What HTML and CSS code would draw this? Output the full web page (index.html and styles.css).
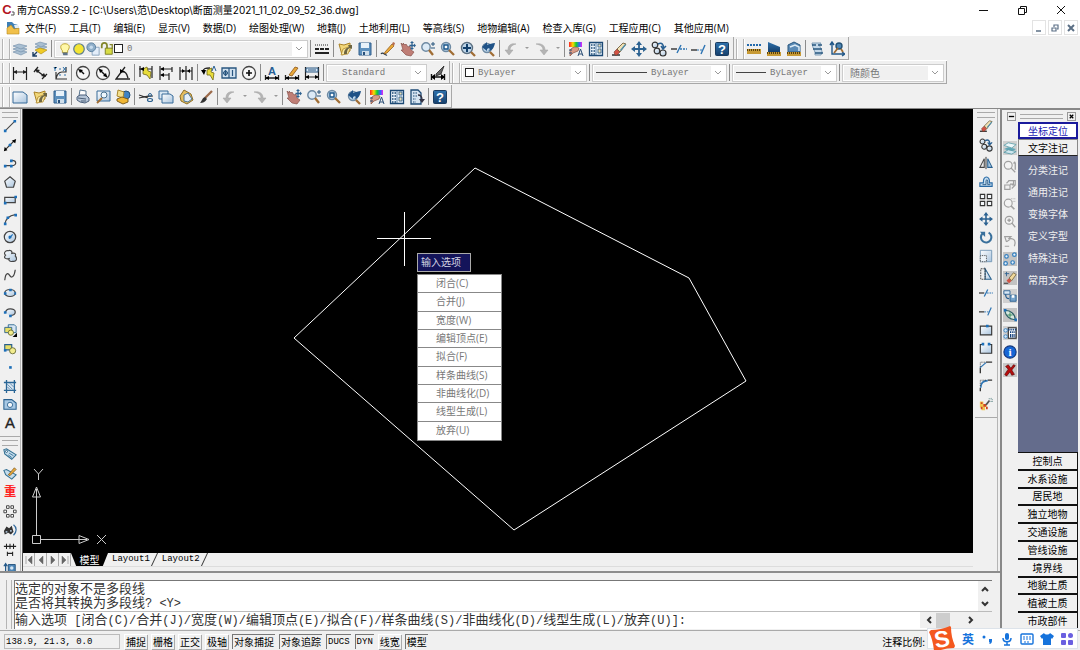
FILE: index.html
```html
<!DOCTYPE html>
<html lang="zh-CN">
<head>
  <meta charset="UTF-8">
  <meta name="viewport" content="width=device-width, initial-scale=1.0">
  <title>南方CASS9.2</title>
  <link rel="stylesheet" href="styles.css">
</head>
<body>
  <svg class="defs" aria-hidden="true">
    <linearGradient id="glass" x2="1" y2="1"><stop stop-color="#fff"/><stop offset="1" stop-color="#a9c4de"/></linearGradient>
    <linearGradient id="deep" x2="0" y2="1"><stop stop-color="#2f72ad"/><stop offset="1" stop-color="#163f6b"/></linearGradient>
    <linearGradient id="rainbow"><stop stop-color="#f22"/><stop offset=".3" stop-color="#fd0"/><stop offset=".55" stop-color="#1c3"/><stop offset=".8" stop-color="#36f"/><stop offset="1" stop-color="#e2e"/></linearGradient>
  </svg>
  <!-- icon sprite -->
  <svg class="sprite" aria-hidden="true">
    <symbol id="layers" viewBox="0 0 16 16"><g fill="#a9bfd2" stroke="#6d8aa6" stroke-width=".6"><path d="M1 11l6-2 8 2-6 3z"/><path d="M1 8l6-2 8 2-6 3z"/><path d="M1 5l6-2 8 2-6 3z"/></g></symbol>
    <symbol id="layerprev" viewBox="0 0 16 16"><g fill="#a9bfd2" stroke="#6d8aa6" stroke-width=".6"><path d="M3 6l5-2 7 2-6 3z"/><path d="M3 3l5-2 7 2-6 3z"/></g><path d="M3 9l5-2 7 2-6 4z" fill="#f0cb28" stroke="#a98608" stroke-width=".6"/><path d="M1 15l4-4M1 11v4h4" stroke="#1c3f66" stroke-width="1.4" fill="none"/></symbol>
    <symbol id="bulb" viewBox="0 0 16 16"><path d="M5 10C1 5 4 2 8 2s7 3 3 8v2H5z" fill="#fff8a8" stroke="#b59b22"/><path d="M5 12h6v3H6z" fill="#5f7388"/></symbol>
    <symbol id="sun" viewBox="0 0 16 16"><circle cx="8" cy="8" r="6" fill="#f4e533" stroke="#5d7d8d" stroke-width="1.4"/></symbol>
    <symbol id="freeze" viewBox="0 0 16 16"><path d="M7 6h8v9H7z" fill="#e4eefa" stroke="#85a0bb"/><circle cx="6" cy="6" r="5" fill="#8faec9" stroke="#557c9d"/><circle cx="6" cy="6" r="2" fill="#c6dbee"/></symbol>
    <symbol id="lock" viewBox="0 0 16 16"><path d="M2 7V4a3 3 0 0 1 6 0v4" fill="none" stroke="#83862c" stroke-width="2"/><path d="M6 7h8v7H6z" fill="#d8dc45" stroke="#76791f"/><path d="M11 3h3v5" fill="none" stroke="#83862c" stroke-width="1.5"/></symbol>
    <symbol id="ltype" viewBox="0 0 16 16"><path d="M1 4h14" stroke="#222" stroke-dasharray="1 1"/><path d="M1 8h14" stroke="#222" stroke-width="2" stroke-dasharray="4 1"/><path d="M1 12h14" stroke="#222" stroke-width="2"/></symbol>
    <symbol id="open" viewBox="0 0 16 16"><path d="M2 3l5 1 6-2v8l-8 4z" fill="#f2d779" stroke="#aa8227"/><path d="M4 14l2-6 8-3-3 8z" fill="#f7e6a1" stroke="#aa8227" stroke-width=".7"/><path d="M7 13c0-4 2-6 5-7l-1-2h4v4l-2-1c-3 1-3 4-3 6z" fill="#6d6541"/></symbol>
    <symbol id="save" viewBox="0 0 16 16"><path d="M2 2h12v12H2z" fill="#5d90bd" stroke="#315e8c"/><path d="M4 2h8v5H4z" fill="#e8f2fa"/><path d="M5 10h7v4H5z" fill="#cfdeea"/><path d="M6 11h2v3H6z" fill="#28517c"/></symbol>
    <symbol id="pencil" viewBox="0 0 16 16"><path d="M1 13c2-3 4 2 6 1" fill="none" stroke="#2b3c4d" stroke-width="1.300"/><path d="M5 11l7-8 2 2-7 7-3 1z" fill="#eaa93a" stroke="#8a5414" stroke-width=".7"/><path d="M12 3l1-2 2 1-1 3z" fill="#b56d50"/></symbol>
    <symbol id="pan" viewBox="0 0 16 16"><path d="M1 2l2 2 0-2 2 2 1-1 2 3 2-1 1 4 3 2-3 4-5-1-5-5 2 0z" fill="#bf7e76" stroke="#7c443e" stroke-width=".6"/><path d="M12 2v5M9.500 4.500h5" stroke="#2d6190" stroke-width="1.300"/><path d="M12 0l-2 2h4zM12 9l-2-2h4zM16 4.500l-2-2v4z" fill="#2d6190"/></symbol>
    <symbol id="zoomrt" viewBox="0 0 16 16"><circle cx="6" cy="6" r="4.200" fill="#dceaf6" stroke="#6e8aa3" stroke-width="1.4"/><path d="M9 9l4 5" stroke="#a06d34" stroke-width="2.300"/><path d="M11 3h4M13 1v4M11 7h4" stroke="#26547d"/></symbol>
    <symbol id="zoomwin" viewBox="0 0 16 16"><circle cx="6" cy="6" r="4.500" fill="#bcd4e8" stroke="#6e8aa3" stroke-width="1.4"/><path d="M4 4h4v4H4z" fill="#fff" stroke="#1c578b" stroke-width="1.400"/><path d="M9 9l5 5" stroke="#a06d34" stroke-width="2.300"/></symbol>
    <symbol id="zoomall" viewBox="0 0 16 16"><circle cx="7" cy="7" r="5.500" fill="#bcd4e8" stroke="#5b6f80" stroke-width="1.400"/><path d="M3 7h8M7 3v8" stroke="#123f6a" stroke-width="2"/><path d="M11 11l4 4" stroke="#a06d34" stroke-width="2.300"/></symbol>
    <symbol id="zoomprev" viewBox="0 0 16 16"><circle cx="7" cy="7" r="4.500" fill="#bcd4e8" stroke="#6e8aa3" stroke-width="1.400"/><path d="M10 11l4 4" stroke="#a06d34" stroke-width="2.300"/><path d="M2 6l5-5v3c3-1 5-2 8-2-1 5-3 8-7 8 2-1 2-2 1-3L7 8v2z" fill="#1f5287"/></symbol>
    <symbol id="undo" viewBox="0 0 16 16"><path d="M13 3C8 2 5 4 5 9l-3 0 4 5 4-5H7c0-3 2-5 6-6z" fill="#b4b4b4" stroke="#a2a2a2" stroke-width=".5"/></symbol>
    <symbol id="redo" viewBox="0 0 16 16"><path d="M2 3c5-1 9 1 9 6h3l-4 5-4-5h3c0-3-2-5-7-6z" fill="#b4b4b4" stroke="#a2a2a2" stroke-width=".5"/></symbol>
    <symbol id="props" viewBox="0 0 16 16"><path d="M1 1h13v5H1z" fill="url(#rainbow)"/><path d="M2 9c4-5 8-2 9-2l-1 3-5 2-3 3z" fill="#d99b87" stroke="#88503f" stroke-width=".7"/><path d="M10 15l2.500-7L15 15M11 13h3M1 9h3M1 12h3" stroke="#284c74" fill="none"/></symbol>
    <symbol id="palette" viewBox="0 0 16 16"><path d="M1.500 1.500h13v13h-13z" fill="#eaf2f9" stroke="#1d4a75" stroke-width="1.300"/><path d="M3 4h4M3 7h4M3 10h4M3 13h4" stroke="#1c4a76" stroke-width="1.300" stroke-dasharray="1.500 1"/><path d="M8 2v12" stroke="#5f86aa"/><path d="M10 3h3v3h-3zM10 8h3v4h-3z" fill="#e9dfb8" stroke="#245587" stroke-width=".8"/></symbol>
    <symbol id="sheet" viewBox="0 0 16 16"><path d="M2 1h7l3 3v11H2z" fill="#d6e4f1" stroke="#1d4a75" stroke-width="1.300"/><path d="M4 4h4M4 7h4M4 10h3M4 13h3" stroke="#1c4a76" stroke-dasharray="1.500 1"/><path d="M9 6c3 0 4 2 4 5" fill="none" stroke="#334" stroke-width="1.400"/><path d="M10 10h6l-3 4z" fill="#334"/></symbol>
    <symbol id="eraser" viewBox="0 0 16 16"><path d="M1 14h8" stroke="#222" stroke-width="1.400"/><path d="M3 11l3-3 3 3-3 3H4z" fill="#d15344" stroke="#75352b" stroke-width=".6"/><path d="M6 8l6-6 3 1-6 8z" fill="#f3e2b4" stroke="#62512d" stroke-width=".8"/><path d="M9 9l5-6 1 1-5 6z" fill="#4f8fae"/></symbol>
    <symbol id="move" viewBox="0 0 16 16"><path d="M8 2v12M2 8h12" stroke="#2c6291" stroke-width="1.800"/><path d="M8 0l3 4H5zM8 16l3-4H5zM0 8l4-3v6zM16 8l-4-3v6z" fill="#2c6291"/></symbol>
    <symbol id="copy" viewBox="0 0 16 16"><circle cx="4" cy="4" r="2.800" fill="url(#glass)" stroke="#333" stroke-width="1.200"/><circle cx="6" cy="10" r="2.800" fill="url(#glass)" stroke="#333" stroke-width="1.200"/><circle cx="12" cy="12" r="3" fill="url(#glass)" stroke="#333" stroke-width="1.200"/><path d="M7 3c4-2 6 1 5 4M10 5l2 3 3-3" fill="none" stroke="#285f91" stroke-width="1.500"/></symbol>
    <symbol id="trim" viewBox="0 0 16 16"><path d="M0 8h6" stroke="#222" stroke-width="1.300"/><path d="M6 12l4-8" stroke="#2d74b3" stroke-width="1.400"/><path d="M9 8h7" stroke="#2d74b3" stroke-width="1.300" stroke-dasharray="2 1"/></symbol>
    <symbol id="extend" viewBox="0 0 16 16"><path d="M0 9h6" stroke="#222" stroke-width="1.300"/><path d="M6 9h5" stroke="#2d74b3" stroke-dasharray="2 1"/><path d="M10 13l4-9" stroke="#2d74b3" stroke-width="1.400"/></symbol>
    <symbol id="help" viewBox="0 0 16 16"><rect x="1.500" y="1.500" width="13" height="13" rx="1" fill="url(#deep)" stroke="#1a3c60"/><text x="8" y="13" class="i-help">?</text></symbol>
    <symbol id="dist" viewBox="0 0 16 16"><path d="M1 4h14" stroke="#2269ad" stroke-width="2" stroke-dasharray="2 1"/><path d="M1 8h14v5H1z" fill="#c79a35"/><path d="M1 9h14" stroke="#5d4108" stroke-width="2" stroke-dasharray="1 1"/></symbol>
    <symbol id="area" viewBox="0 0 16 16"><path d="M2 1l12 5v5H2z" fill="url(#deep)"/><path d="M1 11h14v4H1z" fill="#c79a35"/><path d="M1 12h14" stroke="#5d4108" stroke-width="2" stroke-dasharray="1 1"/></symbol>
    <symbol id="mass" viewBox="0 0 16 16"><path d="M2 4l6-3 6 3v7H2z" fill="#5a8ab5" stroke="#29577f"/><path d="M4 6l5-2 4 2v4" fill="none" stroke="#ddebf5" stroke-width="1.500"/><path d="M1 11h14v4H1z" fill="#c79a35"/><path d="M1 12h14" stroke="#5d4108" stroke-width="2" stroke-dasharray="1 1"/></symbol>
    <symbol id="list" viewBox="0 0 16 16"><path d="M3 2h9c-3 3 1 6 1 9l-1 3H6c1-4-3-7-3-12z" fill="#c4d8e9" stroke="#7f9cb5"/><path d="M3 4h4M4 8h5M6 12h5M9 4h4M9 8h4M11 12h3" stroke="#28577f" stroke-width="1.300"/></symbol>
    <symbol id="locate" viewBox="0 0 16 16"><path d="M3 2v11h12M1 4l2-3 2 3M13 11l3 2-3 2" fill="none" stroke="#225889" stroke-width="1.400"/><circle cx="10" cy="5" r="3" fill="#4f86b4" stroke="#235174" stroke-width="1.400"/><path d="M9 7l-4 5M12 8l2 3" stroke="#a06d34" stroke-width="1.800"/></symbol>

    <symbol id="dimlin" viewBox="0 0 16 16"><path d="M1.500 2v13M14.500 2v13M2 7h12" stroke="#222" stroke-width="1.200"/><path d="M1 7l4-2v4zM15 7l-4-2v4z" fill="#222"/></symbol>
    <symbol id="dimali" viewBox="0 0 16 16"><path d="M2 7l4-5M10 14l5-5M4 5l8 6" stroke="#222" stroke-width="1.300"/><path d="M3 4l5 1-3 3zM14 12l-5-1 3-3z" fill="#222"/></symbol>
    <symbol id="dimord" viewBox="0 0 16 16"><path d="M4 7v7h11M4 14c1-5 3-7 6-7h4V2" stroke="#333" fill="none" stroke-width="1.200"/><path d="M2 2l1 2 2-2M3 4v2M11 2l3 4M14 2l-3 4M7 4h2M7 10h2M12 10h2" stroke="#2f71a9"/></symbol>
    <symbol id="dimrad" viewBox="0 0 16 16"><circle cx="8" cy="8" r="6.500" fill="#f7f7f7" stroke="#444" stroke-width="1.300"/><path d="M9 9L5 5" stroke="#111" stroke-width="1.500"/><path d="M3 4l5 1-3 3z"/></symbol>
    <symbol id="dimdia" viewBox="0 0 16 16"><circle cx="8" cy="8" r="6.500" fill="#f7f7f7" stroke="#444" stroke-width="1.300"/><path d="M4 4l8 8" stroke="#111" stroke-width="1.500"/><path d="M4 4l4 1-3 3zM12 12l-4-1 3-3z"/></symbol>
    <symbol id="dimang" viewBox="0 0 16 16"><path d="M10 2L1 14h14M6 6c4 0 6 2 7 7" fill="none" stroke="#222" stroke-width="1.300"/><path d="M5 4l5 3-5 1z"/></symbol>
    <symbol id="qdim" viewBox="0 0 16 16"><path d="M1 4h13M2 1v11M14 1v12" stroke="#222" stroke-width="1.200"/><path d="M5 4l4-2 1 4 3 1-1 7-3-4-4-1z" fill="#e8dc3a" stroke="#706715" stroke-width=".8"/><path d="M2 4l4-2v4z"/></symbol>
    <symbol id="dimbase" viewBox="0 0 16 16"><path d="M2 1v14M14 2v5M3 4h11M3 10h8M11 8v7" stroke="#222" stroke-width="1.200"/><path d="M2 4l4-2v4zM2 10l4-2v4z"/></symbol>
    <symbol id="dimcont" viewBox="0 0 16 16"><path d="M2 2v13M8 1v14M14 2v13M2 6h12" stroke="#222" stroke-width="1.200"/><path d="M7 6L4 4v4zM9 6l3-2v4z"/></symbol>
    <symbol id="leader" viewBox="0 0 16 16"><path d="M2 7c0-4 3-4 7-4" fill="none" stroke="#222" stroke-width="1.300"/><path d="M0 5l5 0-2 5z"/><path d="M6 5l5-2-1 4 3 1-1 7-3-5-3 0z" fill="#e8dc3a" stroke="#706715" stroke-width=".8"/><path d="M11 6l2-5 2 5" fill="none" stroke="#265e94"/></symbol>
    <symbol id="tol" viewBox="0 0 16 16"><path d="M1 3h14v10H1z" fill="#d2e2f0" stroke="#28557f" stroke-width="1.300"/><path d="M8 3v10M11.500 5v6M2 8h5M4.500 5v6" stroke="#28557f" stroke-width="1.200"/><circle cx="4.500" cy="8" r="2" fill="none" stroke="#28557f"/></symbol>
    <symbol id="center" viewBox="0 0 16 16"><circle cx="8" cy="8" r="6.500" fill="#f7f7f7" stroke="#444" stroke-width="1.300"/><path d="M5 8h6M8 5v6" stroke="#111" stroke-width="1.700"/></symbol>
    <symbol id="dimedit" viewBox="0 0 16 16"><text x="8" y="10" class="i-blue">A</text><path d="M1.500 10v5M14.500 10v5M2 13h12" stroke="#222" stroke-width="1.300"/><path d="M1 13l4-2v4zM15 13l-4-2v4z"/></symbol>
    <symbol id="dimtedit" viewBox="0 0 16 16"><path d="M1.500 10v5M14.500 10v5M2 13h12" stroke="#222" stroke-width="1.300"/><path d="M5 10l6-8 3 1-6 8z" fill="#e9a93b" stroke="#8a5316" stroke-width=".8"/><path d="M1 13l4-2v4zM15 13l-4-2v4z"/></symbol>
    <symbol id="dimupd" viewBox="0 0 16 16"><path d="M1.500 2v13M14.500 2v13M2 12h12" stroke="#222" stroke-width="1.200"/><path d="M2 3h12v4H2z" fill="#d9e8f5" stroke="#28557f"/><path d="M4 5h8" stroke="#28557f"/><path d="M1 12l4-2v4zM15 12l-4-2v4z"/></symbol>
    <symbol id="dimstyle" viewBox="0 0 16 16"><path d="M1.500 9v6M14.500 9v6M2 12h12" stroke="#111" stroke-width="1.400"/><path d="M1 12l4-3v6zM15 12l-4-3v6z"/><path d="M6 9l8-8-3 8-5 2z" fill="#666" stroke="#222" stroke-width=".8"/></symbol>

    <symbol id="new" viewBox="0 0 16 16"><path d="M1 3h10l4 3v8H1z" fill="url(#glass)" stroke="#376b99"/></symbol>
    <symbol id="print" viewBox="0 0 16 16"><path d="M5 1l6 1v5H4z" fill="#fff" stroke="#59748e"/><path d="M2 8l3-2h6l3 3v3l-4 2-5-1-3-2z" fill="#b5c4d6" stroke="#4a5e7a"/><path d="M3 9l8 1M6 12h5" stroke="#4c6078"/></symbol>
    <symbol id="preview" viewBox="0 0 16 16"><path d="M2 2h13v10H2z" fill="url(#glass)" stroke="#376b99"/><circle cx="9" cy="6" r="3" fill="#edf6fc" stroke="#49718f"/><path d="M7 9l-5 5" stroke="#a06d34" stroke-width="2"/></symbol>
    <symbol id="publish" viewBox="0 0 16 16"><circle cx="11" cy="6" r="4" fill="#4083c2" stroke="#245078"/><path d="M3 1l6 2-1 6-6-2z" fill="#f3df8c" stroke="#a9862d"/><path d="M2 10l5-2 6 2v3l-5 2-6-3z" fill="#f0b633" stroke="#7f6020"/></symbol>
    <symbol id="cut" viewBox="0 0 16 16"><path d="M1 6l9 3M1 9l9-2h5" stroke="#333" stroke-width="1.200"/><circle cx="12" cy="6" r="1.500" fill="none" stroke="#2d618f"/><ellipse cx="12" cy="11" rx="2.500" ry="1.500" fill="none" stroke="#2d618f" stroke-width="1.200"/></symbol>
    <symbol id="copyclip" viewBox="0 0 16 16"><path d="M1 2h9v8H1z" fill="#d9e7f3" stroke="#376b99"/><path d="M4 5h8l3 2v7H4z" fill="url(#glass)" stroke="#376b99"/></symbol>
    <symbol id="paste" viewBox="0 0 16 16"><path d="M2 7l4-6 7 4 2 6-6 4-6-3z" fill="#e4bd5e" stroke="#8c6d27"/><path d="M6 6l4-2 4 6-4 3-4-1z" fill="#e4eff8" stroke="#4b7497"/></symbol>
    <symbol id="brush" viewBox="0 0 16 16"><path d="M14 2l-7 7" stroke="#9b6a4a" stroke-width="2.300"/><path d="M7 8l2 2c-2 3-4 4-7 4 2-2 2-5 5-6z" fill="#333"/></symbol>

    <symbol id="line" viewBox="0 0 16 16"><path d="M3 13L13 3" stroke="#444" stroke-width="1.300"/><path d="M1 12h3v3H1zM12 1h3v3h-3z" fill="#1c6fb9"/></symbol>
    <symbol id="xline" viewBox="0 0 16 16"><path d="M3 13L13 3" stroke="#333" stroke-width="1.500"/><path d="M1 15l1-5 3 4zM15 1l-1 5-4-3z"/><circle cx="8" cy="8" r="1.800" fill="#1c6fb9"/></symbol>
    <symbol id="pline" viewBox="0 0 16 16"><path d="M2 11h8c6 0 6-6 0-6" fill="none" stroke="#444" stroke-width="1.400"/><path d="M1 10h3v3H1zM8 10h3v3H8zM8 4h3v3H8z" fill="#1c6fb9"/></symbol>
    <symbol id="polygon" viewBox="0 0 16 16"><path d="M8 2l6 5-2 7H4L2 7z" fill="url(#glass)" stroke="#444" stroke-width="1.400"/></symbol>
    <symbol id="rect" viewBox="0 0 16 16"><path d="M2 5h12v6H2z" fill="url(#glass)" stroke="#444" stroke-width="1.400"/><path d="M1 10h3v3H1zM13 3h3v3h-3z" fill="#1c6fb9"/></symbol>
    <symbol id="arc" viewBox="0 0 16 16"><path d="M2 14C3 8 7 4 14 3" fill="none" stroke="#444" stroke-width="1.400"/><path d="M1 12h3v3H1zM4 5h3v3H4zM13 2h3v3h-3z" fill="#1c6fb9"/></symbol>
    <symbol id="circle" viewBox="0 0 16 16"><circle cx="8" cy="8" r="6.500" fill="url(#glass)" stroke="#444" stroke-width="1.400"/><path d="M7 10l4-5" stroke="#1c6fb9" stroke-width="1.300"/><circle cx="8" cy="8" r="1.800" fill="#1c6fb9"/></symbol>
    <symbol id="cloud" viewBox="0 0 16 16"><path d="M3 7c-3-2 0-6 3-5 2-1 5 0 4 3 4-1 5 1 4 3 3 3 1 7-3 6-3 1-5-1-4-3-4 1-7-1-4-4z" fill="url(#glass)" stroke="#444" stroke-width="1.300"/></symbol>
    <symbol id="spline" viewBox="0 0 16 16"><path d="M2 14C3 4 6 6 8 9s5 1 6-7" fill="none" stroke="#444" stroke-width="1.400"/></symbol>
    <symbol id="ellipse" viewBox="0 0 16 16"><ellipse cx="8" cy="8" rx="6" ry="4" fill="url(#glass)" stroke="#444" stroke-width="1.400"/><path d="M1 7h3v3H1zM7 3h3v3H7zM13 7h2v3h-2z" fill="#1c6fb9"/></symbol>
    <symbol id="earc" viewBox="0 0 16 16"><path d="M3 9c-1-6 11-6 11-1 0 3-3 4-6 4" fill="url(#glass)" stroke="#444" stroke-width="1.400"/><path d="M1 7h3v3H1zM7 11h3v3H7z" fill="#1c6fb9"/></symbol>
    <symbol id="insert" viewBox="0 0 16 16"><path d="M6 2h7l2 2v7H6z" fill="#d7e6f3" stroke="#28658f"/><path d="M2 5h8v6H2z" fill="#e7de67" stroke="#285f8c"/><circle cx="9" cy="11" r="3" fill="#f2ec8e" stroke="#666930"/><path d="M16 11v5h-5z"/></symbol>
    <symbol id="block" viewBox="0 0 16 16"><path d="M2 3h8v6H2z" fill="#e7de67" stroke="#285f8c" stroke-width="1.300"/><circle cx="11" cy="10" r="3.500" fill="#f2ec8e" stroke="#666930"/><path d="M1 8h3v3H1z" fill="#1c6fb9"/></symbol>
    <symbol id="point" viewBox="0 0 16 16"><path d="M7 7h3v3H7z" fill="#1c6fb9"/></symbol>
    <symbol id="hatch" viewBox="0 0 16 16"><path d="M4 4h9v9H4z" fill="#dce8f2"/><path d="M1 4h14M1 13h14M4 1v15M13 1v15" stroke="#2a6696" stroke-width="1.500"/><path d="M5 6l6 6M8 5l4 4M5 9l3 3" stroke="#4e7fa8"/></symbol>
    <symbol id="region" viewBox="0 0 16 16"><path d="M1 3h9l5 4v7H1z" fill="#a9c9e4" stroke="#28608f" stroke-width="1.200"/><circle cx="8" cy="9" r="3" fill="#f2f6fa" stroke="#28608f"/></symbol>
    <symbol id="text" viewBox="0 0 16 16"><text x="8" y="14" class="i-a">A</text></symbol>
    <symbol id="tag" viewBox="0 0 16 16"><path d="M1 3l3-1 11 7-5 5-8-6z" fill="#c5dceb" stroke="#337092" stroke-width="1.200"/><circle cx="4" cy="5" r="1.200" fill="#fff" stroke="#245a80"/><path d="M7 7l5 3M6 9l4 3" stroke="#327199"/></symbol>
    <symbol id="tagedit" viewBox="0 0 16 16"><path d="M1 5l3-1 11 6-5 5-7-5z" fill="#c5dceb" stroke="#337092" stroke-width="1.200"/><path d="M6 10l7-8 2 2-7 7z" fill="#e9a93b" stroke="#745018" stroke-width=".8"/></symbol>
    <symbol id="weight" viewBox="0 0 16 16"><text x="8" y="13" class="i-zhong">重</text></symbol>
    <symbol id="nodes4" viewBox="0 0 16 16"><path d="M4 2h3v3H4zM9 2h3v3H9zM1 7h3v3H1zM12 7h3v3h-3zM4 12h3v3H4zM9 12h3v3H9z" fill="#fff" stroke="#444" stroke-width="1.100"/></symbol>
    <symbol id="find" viewBox="0 0 16 16"><path d="M1 9l3-5 3 2 3-3 2 7-3 3-3-2-4 2z" fill="#333"/><path d="M3 10h2M8 9h2" stroke="#a4b8cb" stroke-width="2"/><path d="M12 2c4 3 4 8 0 12" fill="none" stroke="#31699c" stroke-width="1.400"/></symbol>
    <symbol id="dims" viewBox="0 0 16 16"><path d="M1 5h14M4 2v6M8 2v6M12 2v6M5 11v5M11 11v5M5 13h6" stroke="#222" stroke-width="1.200"/></symbol>
    <symbol id="blockref" viewBox="0 0 16 16"><path d="M3 4v11M1 6l2-3 2 3" fill="none" stroke="#225889" stroke-width="1.400"/><path d="M6 4h8v9H6z" fill="#4d86b8" stroke="#1f4e79"/><circle cx="10" cy="8" r="2" fill="#d3e5f3"/></symbol>

    <symbol id="mirror" viewBox="0 0 16 16"><path d="M6 3v10H1z" fill="#eee" stroke="#444" stroke-width="1.200"/><path d="M10 3v10h5z" fill="#a6c8e4" stroke="#28608f" stroke-width="1.200"/><path d="M8 1v14" stroke="#222"/></symbol>
    <symbol id="offset" viewBox="0 0 16 16"><path d="M1 13v-4h4c-1-9 8-9 7 0h3v4z" fill="#c1dbef" stroke="#2869a4" stroke-width="1.300"/><path d="M4 11h4V7c0-2 2-2 2 0v4h3" fill="none" stroke="#28557f"/></symbol>
    <symbol id="array" viewBox="0 0 16 16"><path d="M1.500 1.500h5v5h-5zM9.500 1.500h5v5h-5zM1.500 9.500h5v5h-5zM9.500 9.500h5v5h-5z" fill="#f4f7fa" stroke="#333" stroke-width="1.300"/></symbol>
    <symbol id="rotate" viewBox="0 0 16 16"><path d="M4 4a6 6 0 1 0 7-1" fill="none" stroke="#39709c" stroke-width="2.400"/><path d="M1 2h6v6z" fill="#39709c"/></symbol>
    <symbol id="scale" viewBox="0 0 16 16"><path d="M1.500 1.500h13v13h-13z" fill="url(#glass)" stroke="#6f93b3"/><path d="M1.500 7.500h7v7h-7z" fill="#eef4f9" stroke="#333" stroke-dasharray="1 1"/></symbol>
    <symbol id="stretch" viewBox="0 0 16 16"><path d="M7 2l7 12H7z" fill="url(#glass)" stroke="#2b638f" stroke-width="1.200"/><path d="M7 2H2v12h5z" fill="none" stroke="#333" stroke-dasharray="2 1"/></symbol>
    <symbol id="breakpt" viewBox="0 0 16 16"><path d="M1.500 3.500h13v10h-13z" fill="url(#glass)" stroke="#333" stroke-width="1.300"/><path d="M8 2h3v3H8z" fill="#1c6fb9"/></symbol>
    <symbol id="breakgap" viewBox="0 0 16 16"><path d="M1.500 4h13v10h-13z" fill="url(#glass)"/><path d="M4 4H1.500v10h13V4H12" fill="none" stroke="#333" stroke-width="1.300"/><path d="M3 2h3v3H3zM10 2h3v3h-3z" fill="#1c6fb9"/></symbol>
    <symbol id="chamfer" viewBox="0 0 16 16"><path d="M1.500 15V9M8 2.500h7" stroke="#333" stroke-width="1.500"/><path d="M1 9l7-6" stroke="#2d74b3" stroke-width="1.500"/><path d="M1.500 8V2.500H8" fill="none" stroke="#333" stroke-dasharray="1 1"/></symbol>
    <symbol id="fillet" viewBox="0 0 16 16"><path d="M1.500 15v-4M10 2.500h5" stroke="#333" stroke-width="1.500"/><path d="M2 11c0-5 3-8 8-8" fill="none" stroke="#2d74b3" stroke-width="1.800"/><path d="M1.500 9V2.500H8" fill="none" stroke="#333" stroke-dasharray="1 1"/></symbol>
    <symbol id="explode" viewBox="0 0 16 16"><path d="M1 5h4v3h4v3h-2v4H3v-3H1z" fill="#f0c850"/><path d="M2 6h2v2H2zM5 8h3v3H5zM2 11h2v3H2zM8 11h2v3H8z" fill="#cf4424"/><path d="M8 9l4-5" stroke="#555" stroke-width="2"/><path d="M11 2h2M14 1v2M13 5h3M15 3h1" stroke="#799"/></symbol>

    <symbol id="lay3" viewBox="0 0 16 16"><path d="M0 0h16v16H0z" fill="#d0d0d0"/><path d="M1 5l5-3 9 2-5 4z" fill="#eef8fb" stroke="#66a3ad"/><path d="M1 9l5-2 9 2-5 3z" fill="#5fa6b6"/><path d="M1 13l5-3 9 2-5 3z" fill="#cfe6ee" stroke="#5a99a5"/></symbol>
    <symbol id="gzoom" viewBox="0 0 16 16"><circle cx="6" cy="6" r="4.500" fill="#f3f3f3" stroke="#a0a0a0" stroke-width="1.300"/><path d="M9 9l5 5M14 3v8M12 4l2-2" stroke="#a0a0a0" stroke-width="1.500"/></symbol>
    <symbol id="gboxes" viewBox="0 0 16 16"><path d="M2 8h6v5H2zM6 3h6v4H8M4 6l3-3M12 3l2 0v5l-4 4M10 8h4" fill="none" stroke="#a0a0a0" stroke-width="1.300"/></symbol>
    <symbol id="gzoomdyn" viewBox="0 0 16 16"><circle cx="6" cy="7" r="4.500" fill="#f3f3f3" stroke="#a0a0a0" stroke-width="1.300"/><path d="M9 10l4 4" stroke="#a0a0a0" stroke-width="2"/><path d="M9 2h6M11 5h4" stroke="#a0a0a0" stroke-dasharray="1 1"/></symbol>
    <symbol id="gzoomin" viewBox="0 0 16 16"><circle cx="7" cy="6" r="4.500" fill="#f3f3f3" stroke="#a0a0a0" stroke-width="1.300"/><path d="M10 9l4 5M5 6h4M7 4v4" stroke="#a0a0a0" stroke-width="1.500"/></symbol>
    <symbol id="gback" viewBox="0 0 16 16"><path d="M4 9L2 3h7l-2 2c7 0 8 4 6 9M4 9l4-3M2 14h5" fill="none" stroke="#a0a0a0" stroke-width="1.400"/></symbol>
    <symbol id="rings" viewBox="0 0 16 16"><path d="M0 0h16v16H0z" fill="#c3c3c3"/><g fill="#e7f2fb" stroke="#347fbf" stroke-width="1.400"><circle cx="4" cy="5" r="2"/><circle cx="13" cy="3" r="2"/><circle cx="3" cy="13" r="2"/><circle cx="11" cy="12" r="2"/></g></symbol>
    <symbol id="pinedit" viewBox="0 0 16 16"><path d="M0 0h16v16H0z" fill="#c3c3c3"/><path d="M2 3h5M4 1v5" stroke="#2d6190"/><path d="M4 11l3-3 3 3-3 3z" fill="#d15344"/><path d="M7 8l5-6 3 2-5 7z" fill="#f0d89b" stroke="#62512d" stroke-width=".8"/><path d="M1 14h5" stroke="#222"/></symbol>
    <symbol id="savelink" viewBox="0 0 16 16"><path d="M0 0h16v16H0z" fill="#d0d0d0"/><path d="M1 2h7v4H1z" fill="#d9e8f5" stroke="#285f91"/><path d="M3 6c0 4 1 5 4 5" fill="none" stroke="#285f91" stroke-width="1.500"/><path d="M8 7h7v7H8z" fill="#76a3ca" stroke="#285f91"/><path d="M10 7h3v3h-3z" fill="#fff"/></symbol>
    <symbol id="ovalpts" viewBox="0 0 16 16"><path d="M0 0h16v16H0z" fill="#c3c3c3"/><path d="M2 3c6-1 12 4 12 10C8 14 3 9 2 3z" fill="#d8e8df" stroke="#2e5f66" stroke-width="1.300"/><path d="M5 8h6M8 5v6" stroke="#2b8451"/><path d="M1 1h3v3H1zM13 12h3v3h-3z" fill="#1c6fb9"/></symbol>
    <symbol id="grid" viewBox="0 0 16 16"><path d="M0 0h16v16H0z" fill="#d0d0d0"/><path d="M6 2h9v12H6z" fill="#fff" stroke="#222" stroke-width="1.300"/><path d="M6 4h9M8 7h6M8 10h6M8 12h6" stroke="#123f7b" stroke-width="2" stroke-dasharray="1.500 1"/><circle cx="3" cy="5" r="2" fill="#d4e8f7" stroke="#347fbf"/><circle cx="3" cy="12" r="2" fill="#d4e8f7" stroke="#347fbf"/></symbol>
    <symbol id="info" viewBox="0 0 16 16"><circle cx="8" cy="8" r="7" fill="#1767d6" stroke="#13377c" stroke-width="1.300"/><text x="8" y="13" class="i-info">i</text></symbol>
    <symbol id="cross" viewBox="0 0 16 16"><path d="M0 0h16v16H0z" fill="#c8c8c8"/><path d="M3 4l3-2 3 4 3-4 2 1-4 5 3 5-3 1-2-4-4 5-2-2 4-6z" fill="#b90d0d" stroke="#5f0505" stroke-width=".8"/></symbol>
    <symbol id="chev" viewBox="0 0 8 8"><path d="M1 2l3 3 3-3" fill="none" stroke="currentColor"/></symbol>
  </svg>

  <header class="titlebar">
    <svg class="app-icon" viewBox="0 0 14 14"><text x="5" y="11" class="i-app">C</text><path d="M10 9h2v3h-3" fill="none" stroke="#555"/></svg>
    <h1>南方CASS9.2 - [C:\Users\范\Desktop\断面测量2021_11_02_09_52_36.dwg]</h1>
    <div class="win-buttons">
      <button title="最小化"><svg viewBox="0 0 10 10"><path d="M1 5.500h9" stroke="#111"/></svg></button>
      <button title="还原"><svg viewBox="0 0 10 10"><path d="M1.500 3.500h6v6h-6zM3.500 3V1.500h6v6H8" fill="none" stroke="#111"/></svg></button>
      <button title="关闭"><svg viewBox="0 0 10 10"><path d="M1 1l8 8M9 1L1 9" stroke="#111"/></svg></button>
    </div>
  </header>

  <nav class="menubar">
    <svg class="doc-icon" viewBox="0 0 14 14"><path d="M1 1h5l2 2h3l2 4v6H1z" fill="#3e7fb5"/><path d="M1 7l4-3 3 4 5-1v6H1z" fill="#f1c04a" stroke="#b98a20" stroke-width=".6"/><path d="M8 4l4-1 1 4H9z" fill="#e3edf5"/></svg>
    <a href="#">文件(F)</a><a href="#">工具(T)</a><a href="#">编辑(E)</a><a href="#">显示(V)</a><a href="#">数据(D)</a><a href="#">绘图处理(W)</a><a href="#">地籍(J)</a><a href="#">土地利用(L)</a><a href="#">等高线(S)</a><a href="#">地物编辑(A)</a><a href="#">检查入库(G)</a><a href="#">工程应用(C)</a><a href="#">其他应用(M)</a>
    <div class="mdi-buttons">
      <button title="最小化"><svg viewBox="0 0 10 10"><path d="M2 8h5" stroke="#5b6f85" stroke-width="1.500"/></svg></button>
      <button title="还原"><svg viewBox="0 0 10 10"><path d="M2 5h4v3H2zM4 4V2h4v4H7" fill="none" stroke="#5b6f85" stroke-width="1.200"/></svg></button>
      <button title="关闭"><svg viewBox="0 0 10 10"><path d="M2 2l6 6M8 2L2 8" stroke="#5b6f85" stroke-width="2"/></svg></button>
    </div>
  </nav>

  <div class="toolbars">
    <div class="toolbar-row">
      <div class="toolbar">
        <span class="icons" data-icons="layers layerprev |"></span>
        <div class="combo combo-layer">
          <svg><use href="#bulb"/></svg><svg><use href="#sun"/></svg><svg><use href="#freeze"/></svg><svg><use href="#lock"/></svg><i class="swatch"></i>
          <select aria-label="图层"><option>0</option></select>
          <svg class="arrow"><use href="#chev"/></svg>
        </div>
        <span class="icons" data-icons="| ltype | open save | pencil pan zoomrt zoomwin zoomall zoomprev | undo v redo v | props palette | eraser move copy trim extend | help"></span>
      </div>
      <div class="toolbar">
        <span class="icons" data-icons="dist area mass | list locate"></span>
      </div>
    </div>
    <div class="toolbar-row">
      <div class="toolbar">
        <span class="icons" data-icons="dimlin dimali dimord | dimrad dimdia dimang | qdim dimbase dimcont | leader tol center | dimedit dimtedit dimupd |"></span>
        <div class="combo combo-style">
          <select aria-label="标注样式"><option>Standard</option></select>
          <svg class="arrow"><use href="#chev"/></svg>
        </div>
        <span class="icons" data-icons="dimstyle"></span>
      </div>
      <div class="toolbar">
        <div class="combo combo-color">
          <i class="swatch"></i>
          <select aria-label="颜色"><option>ByLayer</option></select>
          <svg class="arrow"><use href="#chev"/></svg>
        </div>
        <i class="sep"></i>
        <div class="combo combo-ltype">
          <i class="rule rule-long"></i>
          <select aria-label="线型"><option>ByLayer</option></select>
          <svg class="arrow"><use href="#chev"/></svg>
        </div>
        <i class="sep"></i>
        <div class="combo combo-lweight">
          <i class="rule"></i>
          <select aria-label="线宽"><option>ByLayer</option></select>
          <svg class="arrow"><use href="#chev"/></svg>
        </div>
        <i class="sep"></i>
        <div class="combo combo-plot">
          <select aria-label="打印样式"><option>随颜色</option></select>
          <svg class="arrow"><use href="#chev"/></svg>
        </div>
      </div>
    </div>
    <div class="toolbar-row">
      <div class="toolbar">
        <span class="icons" data-icons="new open save | print preview publish | cut copyclip paste brush | undo v redo v | pan zoomrt zoomwin zoomprev | props palette sheet | help"></span>
      </div>
    </div>
  </div>

  <main>
    <div class="work">
      <div class="editor">
        <aside class="palette">
          <div class="icons tools-draw" data-icons="line xline pline polygon rect arc circle cloud spline ellipse earc insert block point hatch region text"></div>
          <div class="icons tools-cass" data-icons="tag tagedit weight nodes4 find dims blockref"></div>
        </aside>

        <section class="drawing">
          <div class="canvas">
            <svg class="model">
              <path d="M452 59L666 169 723 272 491 421 271 229z" class="poly"/>
              <path d="M354 129.500h54M381.500 103v54" class="cursor"/>
              <path d="M9.500 426.500h8v8h-8zM13.500 426v-38M18 430.500h38M13.500 378l-4 10h8zM66 430.500l-10-4v8z" class="ucs"/>
              <path d="M13.500 380v8M56 430.500h8M11 360l4.500 5 4.500-5M15.500 365v6M74 426l9 9M83 426l-9 9" class="ucs"/>
            </svg>
            <div class="dyn">
              <div class="dyn-title">输入选项</div>
              <ul>
                <li>闭合(C)</li>
                <li>合并(J)</li>
                <li>宽度(W)</li>
                <li>编辑顶点(E)</li>
                <li>拟合(F)</li>
                <li>样条曲线(S)</li>
                <li>非曲线化(D)</li>
                <li>线型生成(L)</li>
                <li>放弃(U)</li>
              </ul>
            </div>
          </div>
          <div class="tabs">
            <button class="nav" title="第一个"><svg viewBox="0 0 8 8"><path d="M1 0v8M7 0v8L3 4z"/></svg></button>
            <button class="nav" title="上一个"><svg viewBox="0 0 8 8"><path d="M6 0v8L2 4z"/></svg></button>
            <button class="nav" title="下一个"><svg viewBox="0 0 8 8"><path d="M2 0v8l4-4z"/></svg></button>
            <button class="nav" title="最后一个"><svg viewBox="0 0 8 8"><path d="M7 0v8M1 0v8l4-4z"/></svg></button>
            <button class="tab active">模型</button>
            <button class="tab">Layout1</button><i class="slash"></i>
            <button class="tab">Layout2</button><i class="slash"></i>
          </div>
        </section>

        <aside class="palette palette-right">
          <div class="icons tools-modify" data-icons="eraser copy mirror offset array move rotate scale stretch trim extend breakpt breakgap chamfer fillet explode"></div>
        </aside>
      </div>

      <section class="command">
        <i class="grip"></i>
        <div class="command-box">
          <div class="history">
            <p>选定的对象不是多段线<br>是否将其转换为多段线<b>? &lt;Y&gt;</b></p>
            <div class="vscroll"><svg class="up"><use href="#chev"/></svg><svg><use href="#chev"/></svg></div>
          </div>
          <div class="prompt">
            <label for="cmd">输入选项<b> [</b>闭合<b>(C)/</b>合并<b>(J)/</b>宽度<b>(W)/</b>编辑顶点<b>(E)/</b>拟合<b>(F)/</b>样条曲线<b>(S)/</b>非曲线化<b>(D)/</b>线型生成<b>(L)/</b>放弃<b>(U)]:</b></label>
            <input type="text" id="cmd">
            <div class="hscroll"><svg class="left"><use href="#chev"/></svg><i></i><svg class="right"><use href="#chev"/></svg></div>
          </div>
        </div>
      </section>
    </div>

    <aside class="screen-menu">
      <div class="screen-head"><button title="折叠"><svg viewBox="0 0 8 8"><path d="M1 4h6" stroke="#000" stroke-width="1.500"/></svg></button><i></i><button title="关闭"><svg viewBox="0 0 8 8"><path d="M2 2l4 4M6 2L2 6" stroke="#000" stroke-width="1.500"/></svg></button></div>
      <div class="screen-body">
        <div class="icons tools-screen" data-icons="lay3 gzoom gboxes gzoomdyn gzoomin gback rings pinedit savelink ovalpts grid info cross"></div>
        <div class="screen-list">
          <button class="current">坐标定位</button>
          <button>文字注记</button>
          <div class="sub">
            <a href="#">分类注记</a><a href="#">通用注记</a><a href="#">变换字体</a><a href="#">定义字型</a><a href="#">特殊注记</a><a href="#">常用文字</a>
          </div>
          <div class="groups">
            <button>控制点</button><button>水系设施</button><button>居民地</button><button>独立地物</button><button>交通设施</button><button>管线设施</button><button>境界线</button><button>地貌土质</button><button>植被土质</button><button>市政部件</button>
          </div>
        </div>
      </div>
    </aside>
  </main>

  <footer class="statusbar">
    <div class="coords">138.9, 21.3, 0.0</div>
    <button>捕捉</button><button>栅格</button><button>正交</button><button>极轴</button><button class="on">对象捕捉</button><button class="on">对象追踪</button><button class="on mono">DUCS</button><button class="on mono">DYN</button><button>线宽</button><button class="on">模型</button>
    <span class="scale-label">注释比例:</span>
  </footer>

  <div class="ime">
    <svg class="ime-logo" viewBox="0 0 28 28"><path d="M3 5Q13 5 22 1l1 1q0 10 4 19l-1 2q-10 0-18 4l-2-1Q5 15 1 7z" fill="#f4581f"/><text x="14" y="22" class="i-sogou" transform="rotate(-10 14 14)">S</text></svg>
    <span>英</span>
    <svg viewBox="0 0 14 14"><circle cx="4" cy="5" r="1.500"/><path d="M9 7h3c0 3 0 4-2 5l-1-1 1-1H9z"/></svg>
    <svg viewBox="0 0 14 14"><rect x="5" y="1" width="4" height="7" rx="2"/><path d="M3 6c0 5 8 5 8 0M7 10v3M4 13h6" fill="none" stroke="#1673dc" stroke-width="1.500"/></svg>
    <svg viewBox="0 0 14 14"><rect x="1" y="2" width="12" height="10" rx="1" fill="none" stroke="#1673dc" stroke-width="1.400"/><path d="M3 5h8M3 7h8M4 10h6" stroke="#1673dc" stroke-width="1.200" stroke-dasharray="2 1"/></svg>
    <svg viewBox="0 0 14 14"><path d="M4 1c1 2 5 2 6 0l4 3-2 3-1-1v7H3V6L2 7 0 4z"/></svg>
    <svg class="ime-apps" viewBox="0 0 14 14"><rect x="1" y="1" width="5" height="5" rx="1"/><circle cx="10.500" cy="3.500" r="2.500"/><rect x="1" y="8" width="5" height="5" rx="1"/><rect x="8" y="8" width="5" height="5" rx="1"/></svg>
  </div>

  <script>
    // fill each icon strip: "|" is a separator, "v" a drop arrow
    document.querySelectorAll('[data-icons]').forEach(function(strip) {
      strip.innerHTML = strip.dataset.icons.split(' ').map(function(name) {
        if (name === '|') return '<i class="sep"></i>';
        if (name === 'v') return '<button class="drop" title="more"></button>';
        return '<button title="' + name + '"><svg><use href="#' + name + '"/></svg></button>';
      }).join('');
    });
  </script>
</body>
</html>
```
FILE: styles.css
```css
* {
  box-sizing: border-box;
}
body {
  margin: 0;
  height: 100vh;
  display: flex;
  flex-direction: column;
  overflow: hidden;
  position: relative;
  background: #f0f0f0;
  color: #000;
  font: 10px/14px "Open Sans", "Noto Sans CJK SC", sans-serif;
}
button {
  padding: 0;
  border: none;
  background: none;
  color: inherit;
  font: inherit;
}
a {
  color: inherit;
  text-decoration: none;
}
svg {
  display: block;
  flex: none;
}
.defs {
  position: absolute;
  width: 0;
  height: 0;
}
.sprite {
  display: none;
}

/* letters used inside icons */
.i-help { font: bold 13px "Liberation Sans", sans-serif; fill: #fff; text-anchor: middle; }
.i-info { font: bold 13px "Liberation Serif", serif; fill: #fff; text-anchor: middle; }
.i-blue { font: bold 11px "Liberation Sans", sans-serif; fill: #265e94; text-anchor: middle; }
.i-a { font: 17px "Liberation Sans", sans-serif; fill: #222; stroke: #222; stroke-width: .4px; text-anchor: middle; }
.i-zhong { font: bold 14px "Noto Sans CJK SC", sans-serif; fill: #f22; text-anchor: middle; }
.i-app { font: bold 13px "Liberation Sans", sans-serif; fill: #b3161f; text-anchor: middle; }
.i-sogou { font: bold 23px "Liberation Sans", sans-serif; fill: #fff; text-anchor: middle; }

/* title and menu */
.titlebar {
  display: flex;
  align-items: center;
  height: 19px;
  background: #fff;
}
.app-icon {
  width: 14px;
  height: 14px;
  margin: 0 1px 0 2px;
}
h1 {
  margin: 0;
  font: 10px/14px Inter, "Noto Sans CJK SC", sans-serif;
}
.win-buttons {
  display: flex;
  margin-left: auto;
}
.win-buttons button {
  display: grid;
  place-items: center;
  width: 39px;
}
.win-buttons svg {
  width: 10px;
  height: 10px;
}
.menubar {
  display: flex;
  align-items: center;
  gap: 13px;
  height: 17px;
  background: #fff;
}
.doc-icon {
  width: 14px;
  height: 14px;
  margin: 0 -8px 0 6px;
}
.mdi-buttons {
  display: flex;
  gap: 2px;
  margin: 0 2px 0 auto;
}
.mdi-buttons button {
  display: grid;
  place-items: center;
  width: 14px;
  height: 15px;
  border: 1px solid #e3e3e3;
}
.mdi-buttons svg {
  width: 10px;
  height: 10px;
}

/* toolbars */
.toolbars {
  border-bottom: 1px solid #888;
}
.toolbar-row {
  display: flex;
  height: 24px;
}
.toolbar {
  display: flex;
  align-items: center;
  padding-right: 2px;
  border: solid #fff;
  border-width: 1px 0 0;
  box-shadow: inset -1px -1px #a8a8a8;
}
.toolbar::before {
  content: "";
  width: 6px;
  height: 20px;
  margin-left: 2px;
  border: solid #b5b5b5;
  border-width: 0 1px;
  box-shadow: inset 1px 0 #fff, 1px 0 #fff;
}
.icons {
  display: flex;
  align-items: center;
}
.icons button {
  display: grid;
  place-items: center;
  width: 20px;
  height: 18px;
}
.icons svg {
  width: 16px;
  height: 16px;
}
.icons .drop {
  width: 11px;
}
.drop::before {
  content: "";
  border: 2px solid transparent;
  border-top-color: #999;
}
.sep {
  width: 1px;
  height: 17px;
  margin: 0 1px;
  background: #8c8c8c;
}
.combo {
  display: flex;
  align-items: center;
  height: 18px;
  margin: 0 1px;
  border: 2px solid #fff;
  outline: 1px solid #ccc;
  outline-offset: -1px;
  color: #777;
}
.combo svg {
  width: 14px;
  height: 14px;
}
.combo select {
  flex: 1;
  min-width: 0;
  height: 14px;
  padding: 0 0 0 4px;
  border: none;
  appearance: none;
  background: none;
  color: #777;
  font: 9px/14px "Liberation Mono", monospace;
}
.combo .arrow {
  width: 14px;
  padding: 3px;
  background: #fff;
  color: #999;
}
.combo-layer { width: 254px; padding-left: 2px; }
.combo-style { width: 101px; }
.combo-style select { padding-left: 14px; }
.combo-color { width: 126px; padding-left: 2px; }
.combo-ltype { width: 135px; padding-left: 2px; }
.combo-lweight { width: 105px; padding-left: 2px; }
.combo-plot { width: 102px; }
.combo-plot select {
  padding-left: 6px;
  font: 10px/14px "Noto Sans CJK SC", sans-serif;
}
.swatch {
  width: 9px;
  height: 9px;
  border: 1px solid #222;
  background: #fff;
}
.rule {
  width: 30px;
  height: 1px;
  background: #444;
}
.rule-long {
  width: 51px;
}

/* work area */
main {
  flex: 1;
  min-height: 0;
  display: flex;
}
.work {
  flex: 1;
  min-width: 0;
  display: flex;
  flex-direction: column;
}
.editor {
  flex: 1;
  min-height: 0;
  display: flex;
  border-bottom: 2px solid #8c8c8c;
}
.palette {
  width: 21px;
  margin-right: 1px;
  overflow: hidden;
  border-right: 1px solid #b5b5b5;
}
.palette .icons,
.tools-screen {
  flex-direction: column;
  justify-content: space-between;
}
.palette .icons {
  padding-top: 8px;
  position: relative;
  border-bottom: 1px solid #aaa;
}
.palette .icons::before {
  content: "";
  position: absolute;
  top: 3px;
  left: 2px;
  right: 2px;
  height: 4px;
  border: solid #aaa;
  border-width: 1px 0;
}
.palette .icons svg {
  width: 14px;
  height: 14px;
}
.tools-draw { height: 328px; }
.tools-cass { height: 141px; }
.palette .tools-draw,
.palette .tools-modify { padding-bottom: 4px; }
.palette-right {
  width: 23px;
  margin: 0 2px 0 2px;
}
.tools-modify { height: 309px; }
.drawing {
  flex: 1;
  min-width: 0;
  display: flex;
  flex-direction: column;
  border-left: 1px solid #555;
}
.canvas {
  flex: 1;
  min-height: 0;
  position: relative;
  overflow: hidden;
  background: #000;
}
.model {
  width: 100%;
  height: 100%;
  fill: none;
  stroke: #fff;
}
.ucs {
  stroke: #ccc;
}
.dyn {
  position: absolute;
  left: 394px;
  top: 144px;
}
.dyn-title {
  width: 54px;
  height: 19px;
  padding-left: 3px;
  border: 1px solid #aaa;
  background: #14145a;
  color: #d4d4e4;
  line-height: 17px;
}
.dyn ul {
  display: grid;
  grid-auto-rows: 1fr;
  width: 85px;
  height: 167px;
  margin: 2px 0 0;
  padding: 0;
  border: 1px solid #888;
  background: #fff;
  color: #777;
  list-style: none;
}
.dyn li {
  padding-left: 18px;
  border-bottom: 1px solid #888;
  line-height: 17px;
}
.dyn li:last-child {
  border-bottom: none;
}
.tabs {
  display: flex;
  height: 14px;
  margin-bottom: 4px;
  border-bottom: 1px solid #ddd;
  font-size: 9px;
}
.nav {
  display: grid;
  place-items: center;
  width: 12px;
  border-right: 1px solid #aaa;
}
.nav svg {
  width: 8px;
  height: 8px;
  fill: #666;
  stroke: #666;
  stroke-width: .5px;
}
.tab {
  padding: 0 1px 0 4px;
  font-family: "Liberation Mono", monospace;
  line-height: 13px;
}
.tab.active {
  width: 37px;
  padding: 0;
  background: #000;
  color: #fff;
  font: 10px/13px "Noto Sans CJK SC", sans-serif;
  clip-path: polygon(0 0, 100% 0, 86% 100%, 14% 100%);
}
.slash {
  width: 1px;
  margin: 0 3px;
  background: #333;
  transform: skewX(-25deg);
}

/* command line */
.command {
  display: flex;
  height: 57px;
  padding: 7px 8px 1px 4px;
}
.grip {
  width: 6px;
  margin: 0 2px;
  border: solid #b5b5b5;
  border-width: 0 1px;
}
.command-box {
  flex: 1;
  min-width: 0;
  border: solid #777;
  border-width: 1px 0 0 1px;
  background: #fff;
  font: 13px/14px "Noto Sans CJK SC", sans-serif;
  color: #333;
}
.command b {
  font: 12px/14px "Liberation Mono", monospace;
  white-space: pre;
}
.history,
.prompt {
  display: flex;
  justify-content: space-between;
}
.history {
  height: 31px;
  border-bottom: 1px solid #bbb;
}
.history p {
  margin: 0;
}
.vscroll,
.hscroll {
  display: flex;
  align-items: center;
  background: #f0f0f0;
}
.vscroll {
  flex-direction: column;
  justify-content: space-around;
  width: 14px;
}
.vscroll svg,
.hscroll svg {
  width: 8px;
  height: 8px;
  stroke-width: 2px;
}
.up { transform: rotate(180deg); }
.left { transform: rotate(90deg); }
.right { transform: rotate(-90deg); }
.prompt {
  height: 16px;
}
.prompt label {
  white-space: nowrap;
}
.prompt input {
  flex: 1;
  min-width: 0;
  padding: 0;
  border: none;
  outline: none;
  background: none;
}
.hscroll {
  gap: 3px;
  width: 72px;
  padding: 0 17px 0 5px;
}
.hscroll i {
  width: 14px;
  height: 15px;
  margin-right: auto;
  background: #cdcdcd;
}

/* screen menu */
.screen-menu {
  display: flex;
  flex-direction: column;
  width: 80px;
  padding-right: 2px;
  border: solid #888;
  border-width: 1px 0 0 2px;
}
.screen-head {
  display: flex;
  align-items: center;
  gap: 4px;
  height: 12px;
  padding: 0 2px 0 5px;
}
.screen-head i {
  flex: 1;
  height: 5px;
  border: solid #aaa;
  border-width: 1px 0;
}
.screen-head button {
  width: 9px;
  height: 9px;
  border: 1px solid #999;
}
.screen-body {
  flex: 1;
  min-height: 0;
  display: flex;
}
.tools-screen {
  width: 16px;
  height: 240px;
  margin-top: 17px;
}
.tools-screen svg {
  width: 14px;
  height: 14px;
}
.tools-screen button {
  width: 16px;
}
.screen-list {
  flex: 1;
  display: flex;
  flex-direction: column;
  font-family: "Noto Sans CJK SC", sans-serif;
}
.screen-list > button {
  height: 17px;
  border: 1px solid #888;
  border-bottom-color: #222;
}
.screen-list > .current {
  border: 2px solid #1a1a9c;
  background: #fff;
  color: #1a1ab4;
  line-height: 12px;
}
.sub {
  flex: 1;
  display: flex;
  flex-direction: column;
  align-items: center;
  gap: 8px;
  padding-top: 7px;
  background: #646c8c;
  color: #f0f0f0;
}
.groups {
  display: flex;
  flex-direction: column;
  height: 178px;
}
.groups button {
  flex: 1;
  border: solid #111;
  border-width: 1px 1px 1px 0;
}

/* status bar */
.statusbar {
  display: flex;
  align-items: center;
  gap: 4px;
  height: 20px;
  padding: 2px 4px 0;
  border-top: 1px solid #aaa;
  font-family: "Noto Sans CJK SC", sans-serif;
}
.coords {
  width: 116px;
  height: 15px;
  padding-left: 1px;
  border: 1px solid #bbb;
  font: 9px/14px "Liberation Mono", monospace;
}
.statusbar button {
  height: 15px;
  padding: 0 1px;
  border: solid #fff;
  border-width: 1px 0 0 1px;
  line-height: 14px;
  box-shadow: 1px 1px #aaa;
}
.statusbar .on {
  border-color: #777;
  box-shadow: none;
}
.statusbar .mono {
  font: 9px/14px "Liberation Mono", monospace;
}
.scale-label {
  margin: 0 151px 0 auto;
}

/* input method bar */
.ime {
  position: absolute;
  right: 2px;
  bottom: 1px;
  display: flex;
  align-items: center;
  gap: 6px;
  height: 21px;
  padding-right: 3px;
  border: 1px solid #dde3ea;
  background: #fff;
  color: #1673dc;
  font: bold 12px/18px "Noto Sans CJK SC", sans-serif;
}
.ime svg {
  width: 14px;
  height: 14px;
  fill: #1673dc;
}
.ime .ime-logo {
  width: 28px;
  height: 28px;
}
.ime .ime-apps {
  fill: #6a5fe0;
}
```
